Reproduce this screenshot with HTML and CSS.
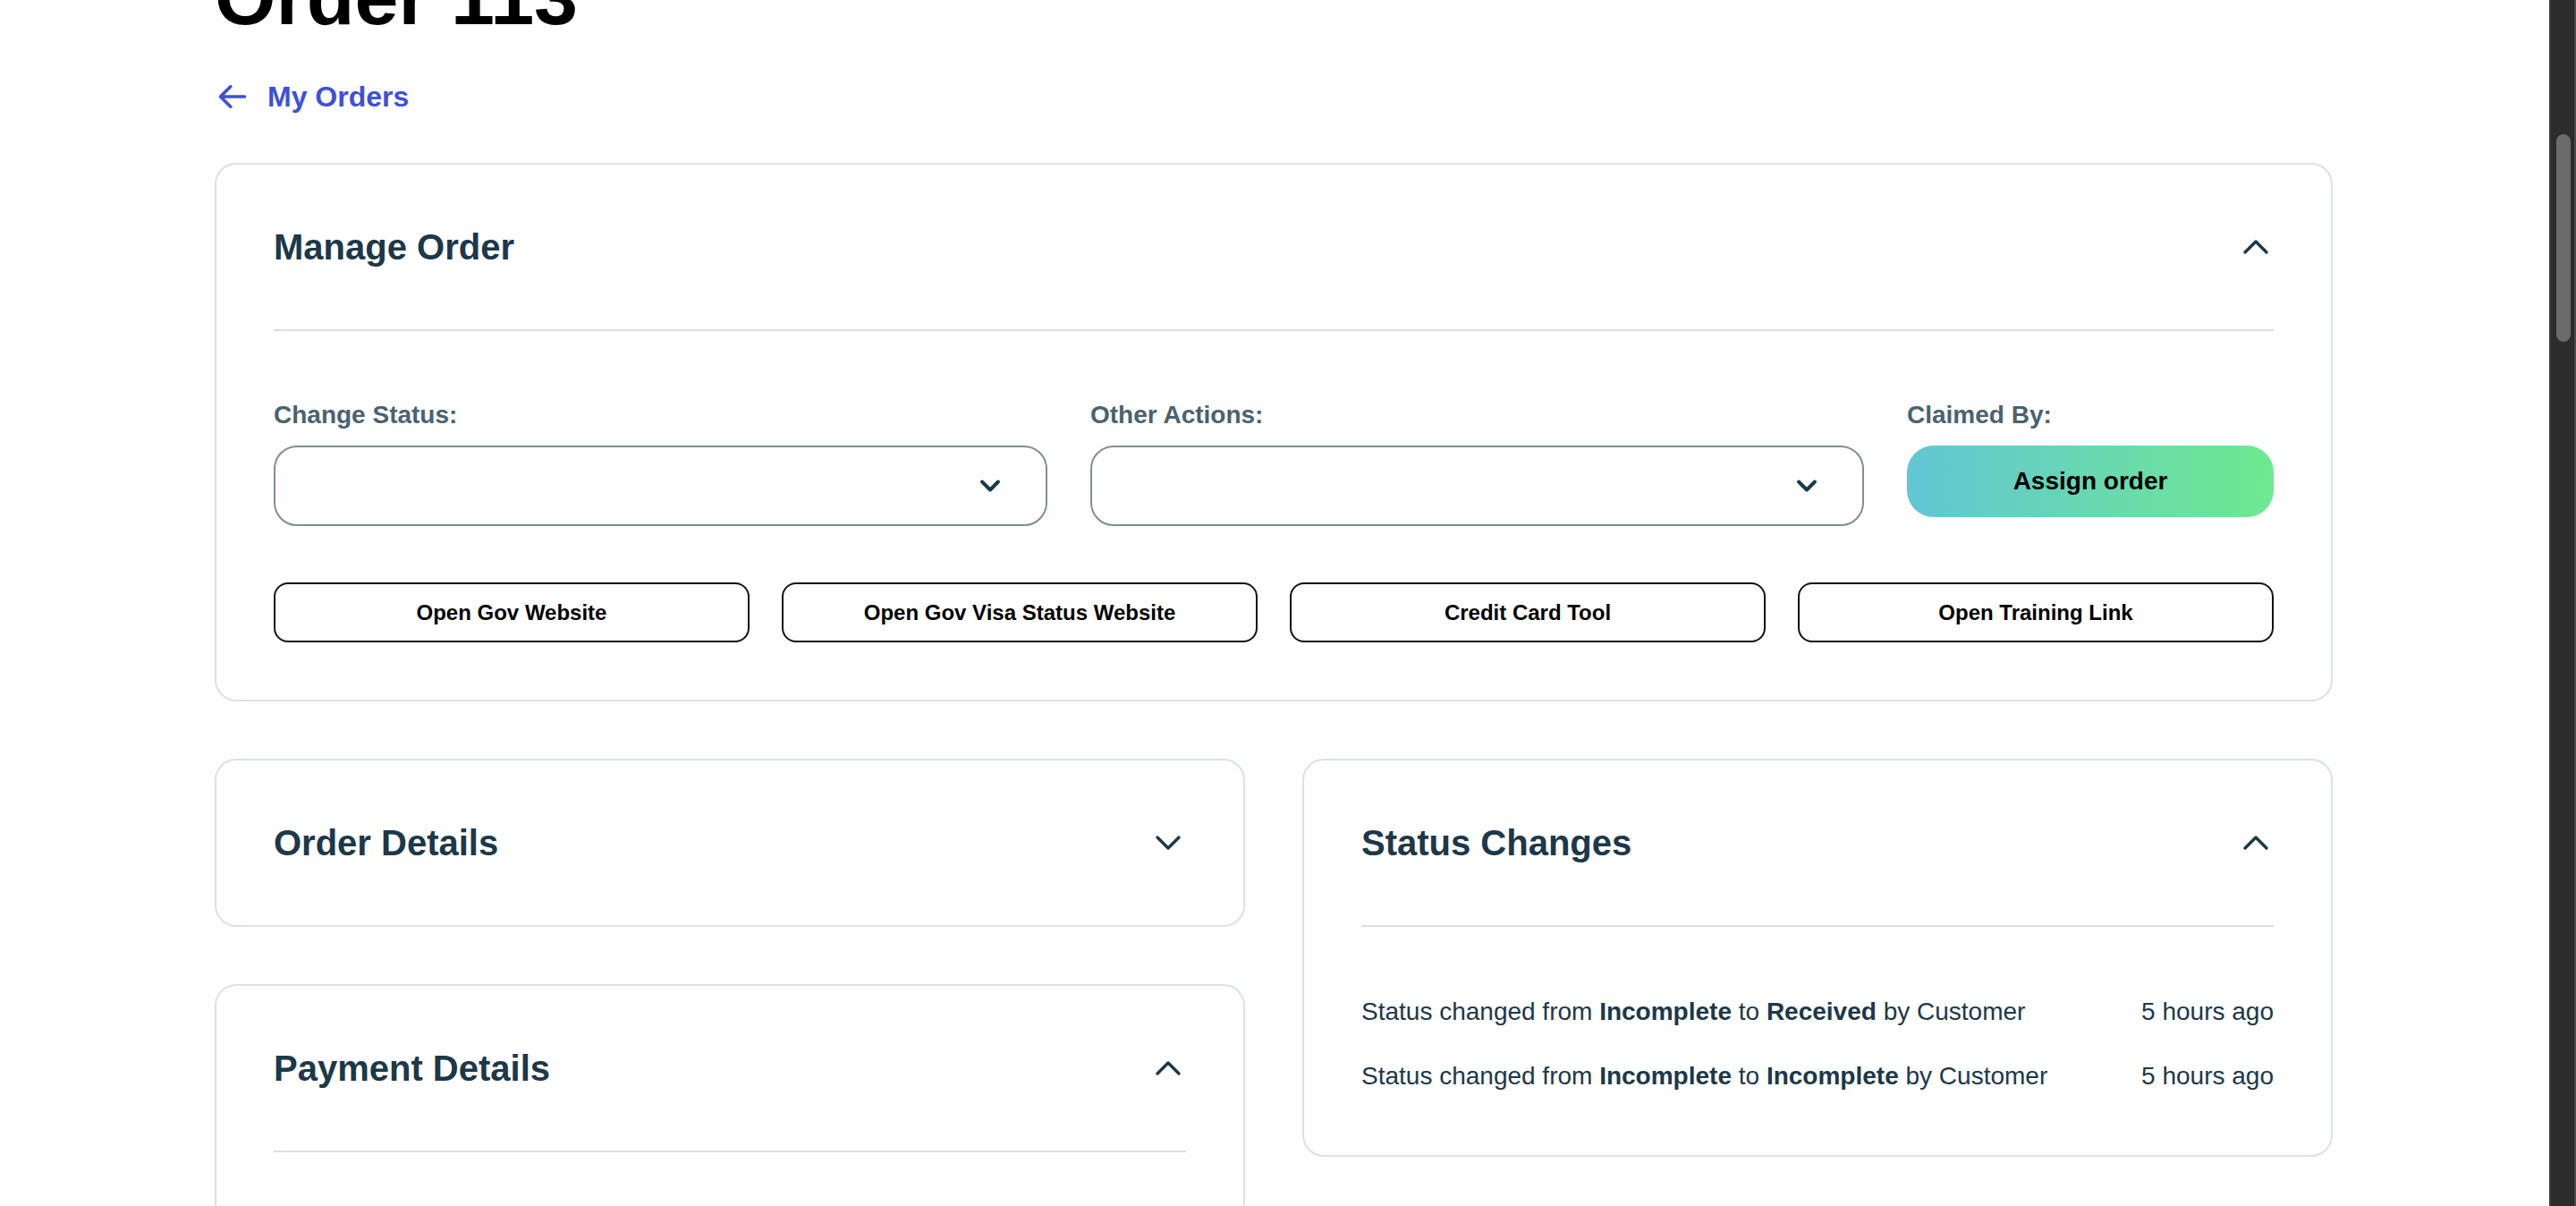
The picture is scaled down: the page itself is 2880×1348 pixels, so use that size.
FILE: index.html
```html
<!DOCTYPE html>
<html lang="en">
<head>
<meta charset="utf-8">
<title>Order 113</title>
<link rel="stylesheet" href="styles.css">
</head>
<body>
<div class="viewport">
  <main class="container">
    <h1 class="page-title">Order 113</h1>
    <a class="back-link" href="#">
      <svg class="back-icon" viewBox="0 0 24 24" fill="none" stroke="currentColor" stroke-width="2.4" stroke-linecap="round" stroke-linejoin="round"><path d="M10.5 19.5 3 12m0 0 7.5-7.5M3 12h18"/></svg>
      <span>My Orders</span>
    </a>

    <section class="card">
      <header class="card-header open">
        <h2 class="card-title">Manage Order</h2>
        <svg class="chev" viewBox="0 0 24 24" fill="none" stroke="currentColor" stroke-width="1.7" stroke-linecap="round" stroke-linejoin="round"><path d="M6 15l6-6 6 6"/></svg>
      </header>
      <div class="manage-body">
        <div class="fields">
          <div class="field">
            <label class="field-label">Change Status:</label>
            <div class="select">
              <svg class="select-chev" viewBox="0 0 24 24" fill="none" stroke="currentColor" stroke-width="2.6" stroke-linecap="round" stroke-linejoin="round"><path d="M6 9l6 6 6-6"/></svg>
            </div>
          </div>
          <div class="field">
            <label class="field-label">Other Actions:</label>
            <div class="select">
              <svg class="select-chev" viewBox="0 0 24 24" fill="none" stroke="currentColor" stroke-width="2.6" stroke-linecap="round" stroke-linejoin="round"><path d="M6 9l6 6 6-6"/></svg>
            </div>
          </div>
          <div class="field">
            <label class="field-label">Claimed By:</label>
            <button class="assign-btn">Assign order</button>
          </div>
        </div>
        <div class="tool-buttons">
          <button class="tool-btn">Open Gov Website</button>
          <button class="tool-btn">Open Gov Visa Status Website</button>
          <button class="tool-btn">Credit Card Tool</button>
          <button class="tool-btn">Open Training Link</button>
        </div>
      </div>
    </section>

    <div class="columns">
      <div class="column">
        <section class="card">
          <header class="card-header">
            <h2 class="card-title">Order Details</h2>
            <svg class="chev" viewBox="0 0 24 24" fill="none" stroke="currentColor" stroke-width="1.7" stroke-linecap="round" stroke-linejoin="round"><path d="M6 9l6 6 6-6"/></svg>
          </header>
        </section>
        <section class="card">
          <header class="card-header open">
            <h2 class="card-title">Payment Details</h2>
            <svg class="chev" viewBox="0 0 24 24" fill="none" stroke="currentColor" stroke-width="1.7" stroke-linecap="round" stroke-linejoin="round"><path d="M6 15l6-6 6 6"/></svg>
          </header>
          <div class="payment-body"></div>
        </section>
      </div>
      <div class="column">
        <section class="card">
          <header class="card-header open">
            <h2 class="card-title">Status Changes</h2>
            <svg class="chev" viewBox="0 0 24 24" fill="none" stroke="currentColor" stroke-width="1.7" stroke-linecap="round" stroke-linejoin="round"><path d="M6 15l6-6 6 6"/></svg>
          </header>
          <div class="status-body">
            <div class="status-row">
              <span>Status changed from <b>Incomplete</b> to <b>Received</b> by Customer</span>
              <span>5 hours ago</span>
            </div>
            <div class="status-row">
              <span>Status changed from <b>Incomplete</b> to <b>Incomplete</b> by Customer</span>
              <span>5 hours ago</span>
            </div>
          </div>
        </section>
      </div>
    </div>
  </main>
</div>
<div class="scrollbar"><div class="scroll-thumb"></div></div>
</body>
</html>
```

FILE: styles.css
```css
* { box-sizing: border-box; }

html, body {
  margin: 0;
  padding: 0;
  height: 1348px;
  overflow: hidden;
  background: #ffffff;
  font-family: "Liberation Sans", Arial, Helvetica, sans-serif;
  color: #1c3849;
}

.viewport {
  padding-right: 32px;
}

.container {
  width: 2368px;
  margin: 0 auto;
}

.page-title {
  margin: -51px 0 0 0;
  font-size: 88px;
  line-height: 96px;
  font-weight: 700;
  color: #000000;
}

.back-link {
  margin-top: 39px;
  display: flex;
  align-items: center;
  gap: 21px;
  height: 48px;
  font-size: 32px;
  line-height: 48px;
  font-weight: 700;
  color: #3e50d9;
  text-decoration: none;
}

.back-icon {
  width: 36px;
  height: 36px;
  margin-left: 2px;
  flex: none;
}

.card {
  border: 2px solid #d9e3e5;
  border-radius: 24px;
  padding: 0 64px;
  background: #ffffff;
}

.container > .card {
  margin-top: 50px;
}

.card-header {
  display: flex;
  align-items: center;
  justify-content: space-between;
  padding: 64px 0;
}

.card-header.open {
  border-bottom: 2px solid #d6e2e4;
}

.card-title {
  margin: 0;
  font-size: 40px;
  line-height: 56px;
  font-weight: 700;
  color: #1c3849;
}

.chev {
  width: 48px;
  height: 48px;
  margin-right: -4px;
  color: #1c3849;
  flex: none;
}

.manage-body {
  padding: 70px 0 64px;
}

.fields {
  display: grid;
  grid-template-columns: 1fr 1fr 410px;
  gap: 48px;
  align-items: start;
}

.field {
  display: flex;
  flex-direction: column;
}

.field-label {
  font-size: 28px;
  line-height: 48px;
  font-weight: 700;
  color: #4a6270;
  margin-bottom: 10px;
}

.select {
  height: 90px;
  border: 2px solid #7d8f96;
  border-radius: 26px;
  display: flex;
  align-items: center;
  justify-content: flex-end;
  padding-right: 44px;
}

.select-chev {
  width: 36px;
  height: 36px;
  color: #1c3849;
}

.assign-btn {
  height: 80px;
  border: none;
  border-radius: 30px;
  background: linear-gradient(90deg, #62c6d4 0%, #6ee98f 100%);
  font-family: inherit;
  font-size: 28px;
  font-weight: 700;
  color: #000000;
  padding: 0;
}

.tool-buttons {
  margin-top: 63px;
  display: grid;
  grid-template-columns: repeat(4, 1fr);
  gap: 36px;
}

.tool-btn {
  height: 67px;
  border: 2px solid #111111;
  border-radius: 16px;
  background: #ffffff;
  font-family: inherit;
  font-size: 24px;
  font-weight: 700;
  color: #000000;
  padding: 0;
}

.columns {
  margin-top: 64px;
  display: grid;
  grid-template-columns: 1fr 1fr;
  gap: 64px;
  align-items: start;
}

.column {
  display: flex;
  flex-direction: column;
  gap: 64px;
}

.payment-body {
  height: 300px;
}

.status-body {
  padding: 71px 0 64px;
  display: flex;
  flex-direction: column;
  gap: 24px;
}

.status-row {
  display: flex;
  justify-content: space-between;
  font-size: 28px;
  line-height: 48px;
  color: #1c3849;
}

.status-row b {
  font-weight: 700;
}

.scrollbar {
  position: fixed;
  top: 0;
  right: 0;
  width: 30px;
  height: 1348px;
  background: #2c2c2c;
  border-left: 2px solid #3d3d3d;
  border-right: 2px solid #4a4a4a;
}

.scroll-thumb {
  position: absolute;
  top: 150px;
  left: 6px;
  width: 16px;
  height: 232px;
  border-radius: 8px;
  background: #6b6b6b;
}
```
